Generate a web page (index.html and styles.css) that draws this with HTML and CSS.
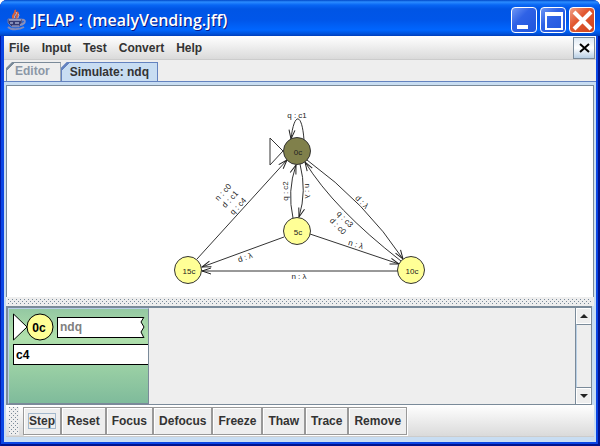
FILE: index.html
```html
<!DOCTYPE html>
<html lang="en">
<head>
  <meta charset="UTF-8">
  <meta name="viewport" content="width=device-width, initial-scale=1.0">
  <title>JFLAP : (mealyVending.jff)</title>
  <link rel="stylesheet" href="styles.css">
</head>
<body>
  <div class="window">
    <header class="titlebar">
      <svg class="logo" width="20" height="22" viewBox="0 0 20 22" fill="none">
        <path d="M7 10C3 6 10 5 8 1M10 10c-2-4 3-4 0-7" stroke="#d9603c" stroke-width="2"/>
        <path d="M8 9c-2-2 3-4 1-6M11 9c0-2 2-3 0-4" stroke="#ffc9a0"/>
        <path d="M1 10h14v4l-3 4H5l-4-4z" fill="#353a72" stroke="#7078a8"/>
        <path d="M2 11h12M3 14h3M8 14h4" stroke="#d6dcf6"/>
        <path d="M5 17h7" stroke="#a9b1da"/>
        <path d="M15 11c4-1 4 4-2 5" stroke="#8a90bc" stroke-width="2"/>
        <path d="M1 18c3 3 11 3 16 0" stroke="#8088b8" stroke-width="2"/>
      </svg>
      <h1>JFLAP : (mealyVending.jff)</h1>
      <button class="win-btn" aria-label="Minimize">
        <svg width="22" height="22" viewBox="0 0 22 22"><path d="M4 16h11v4H4z" fill="#fff"/></svg>
      </button>
      <button class="win-btn" aria-label="Maximize">
        <svg width="22" height="22" viewBox="0 0 22 22"><path d="M3 3h18v18H3zM5 7v12h14V7z" fill="#fff" fill-rule="evenodd"/></svg>
      </button>
      <button class="win-btn win-close" aria-label="Close">
        <svg width="22" height="22" viewBox="0 0 22 22"><path d="M3 3l17 17M20 3L3 20" stroke="#fff" stroke-width="4"/></svg>
      </button>
    </header>

    <nav class="menubar">
      <button>File</button>
      <button>Input</button>
      <button>Test</button>
      <button>Convert</button>
      <button>Help</button>
      <button class="tab-close" aria-label="Close tab">
        <svg width="12" height="12" viewBox="0 0 12 12"><path d="M2 2l9 8M11 2l-9 8" stroke="#000" stroke-width="2"/></svg>
      </button>
    </nav>

    <div class="tabs">
      <button class="tab">Editor</button>
      <button class="tab active">Simulate: ndq</button>
    </div>

    <main class="pane">
      <div class="canvas">
        <svg class="diagram" viewBox="7 86 586 211">
          <defs>
            <marker id="arrow" viewBox="-10 -4 11 8" markerWidth="11" markerHeight="8" markerUnits="userSpaceOnUse" orient="auto">
              <path d="M-9 -3L0 0L-9 3" fill="none" stroke="#222"/>
            </marker>
          </defs>

          <g class="edges">
            <path d="M304 140C302 112 294 112 291 139"/>
            <path d="M197 259L287 160"/>
            <path d="M293 218Q287 191 296 165"/>
            <path d="M300 164Q307 191 299 217"/>
            <path d="M401 261Q334 209 305 162"/>
            <path d="M307 160Q366 203 403 259"/>
            <path d="M284 237L202 267"/>
            <path d="M310 234L399 264"/>
            <path d="M398 271L202 271"/>
          </g>

          <path class="start" d="M270 138L283 151L270 165Z"/>
          <circle class="state current" cx="297" cy="151" r="13.5"/>
          <circle class="state" cx="297" cy="231" r="13.5"/>
          <circle class="state" cx="188" cy="270" r="13.5"/>
          <circle class="state" cx="411" cy="270" r="13.5"/>

          <g class="labels">
            <text x="298" y="155">0c</text>
            <text x="298" y="235">5c</text>
            <text x="189" y="274">15c</text>
            <text x="412" y="274">10c</text>
            <text x="297" y="118">q : c1</text>
            <text transform="translate(225 194) rotate(-47)">n : c0</text>
            <text transform="translate(232 201) rotate(-47)">d : c1</text>
            <text transform="translate(240 208) rotate(-47)">q : c4</text>
            <text transform="translate(288 191) rotate(-90)">q : c2</text>
            <text transform="translate(305 191) rotate(90)">n : λ</text>
            <text transform="translate(360 204) rotate(46)">d : λ</text>
            <text transform="translate(343 221) rotate(46)">q : c3</text>
            <text transform="translate(336 228) rotate(46)">d : c0</text>
            <text transform="translate(355 247) rotate(18)">n : λ</text>
            <text transform="translate(246 260) rotate(-20)">d : λ</text>
            <text x="299" y="279">n : λ</text>
          </g>
        </svg>
      </div>

      <div class="splitter"></div>

      <div class="configs">
        <div class="config">
          <div class="config-row">
            <svg width="41" height="28" viewBox="0 0 41 28">
              <path d="M.5 1v26L14 14z" fill="#fff" stroke="#000"/>
              <circle cx="27" cy="14" r="13" fill="#ffff96" stroke="#000"/>
              <text class="config-state" x="26" y="19">0c</text>
            </svg>
            <div class="tape torn">
              <span>ndq</span>
              <svg width="7" height="21" viewBox="0 0 7 21">
                <path d="M7 0H6L3 5L6 10L3 15L6 21H7Z" fill="#a4d8a8"/>
                <path d="M6 0L3 5L6 10L3 15L6 21" fill="none" stroke="#000"/>
              </svg>
            </div>
          </div>
          <div class="tape output">c4</div>
        </div>
        <div class="scrollbar">
          <button aria-label="Scroll up"><svg width="8" height="4" viewBox="0 0 8 4"><path d="M0 4L4 0L8 4z" fill="#222"/></svg></button>
          <div class="track"></div>
          <button aria-label="Scroll down"><svg width="8" height="4" viewBox="0 0 8 4"><path d="M0 0L4 4L8 0z" fill="#222"/></svg></button>
        </div>
      </div>

      <div class="toolbar">
        <div class="grip"></div>
        <button class="focused"><span>Step</span></button>
        <button>Reset</button>
        <button>Focus</button>
        <button>Defocus</button>
        <button>Freeze</button>
        <button>Thaw</button>
        <button>Trace</button>
        <button>Remove</button>
      </div>
    </main>
  </div>
</body>
</html>
```
FILE: styles.css
```css
* {
  box-sizing: border-box;
}

body {
  margin: 0;
  font-family: "Liberation Sans", Arial, sans-serif;
  font-size: 12px;
  font-weight: bold;
  color: #333;
}

button {
  font: inherit;
  color: inherit;
  padding: 0;
  border: none;
  background: none;
  white-space: nowrap;
}

svg {
  display: block;
}

.window {
  display: flex;
  flex-direction: column;
  height: 100vh;
  padding: 0 4px 4px;
  background: #0a45e4;
  border-radius: 7px 7px 0 0;
  box-shadow: inset 1px 0 #0019a8, inset -2px -2px #00138c;
}

/* title bar */
.titlebar {
  display: flex;
  align-items: center;
  gap: 3px;
  height: 36px;
  flex-shrink: 0;
  margin: 0 -4px;
  padding: 3px 5px 0 7px;
  border-radius: 7px 7px 0 0;
  background: linear-gradient(#0047c8 0, #2b8cff 2px, #0866f4 5px, #0055e5 9px, #0056e9 20px, #0066ff 30px, #0050d8 34px, #003dba);
}

.titlebar h1 {
  flex: 1;
  margin: 0 0 0 2px;
  font-family: "Open Sans", sans-serif;
  font-size: 16px;
  font-weight: 600;
  color: #fff;
  text-shadow: 1px 1px #0a1883;
}

.win-btn {
  width: 26px;
  height: 26px;
  border: 1px solid #fff;
  border-radius: 4px;
  background: linear-gradient(135deg, #6f97f5, #2f62e6 40%, #2056dd);
}

.win-btn svg {
  margin: 1px;
}

.win-close {
  background: linear-gradient(135deg, #f0a088, #e25a33 40%, #cf431c);
}

/* menu */
.menubar {
  display: flex;
  align-items: center;
  gap: 12px;
  height: 24px;
  flex-shrink: 0;
  padding: 0 1px 0 5px;
  background: linear-gradient(#fff, #dadada);
  border-bottom: 1px solid #ccc;
}

.tab-close {
  display: flex;
  align-items: center;
  justify-content: center;
  width: 22px;
  height: 22px;
  margin-left: auto;
  border: 1px solid #7a8a99;
  background: linear-gradient(#dde8f3, #fff 50%, #b8cfe5);
}

/* tabs */
.tabs {
  display: flex;
  height: 21px;
  flex-shrink: 0;
  padding: 2px 2px 0;
  background: #eee;
}

.tab {
  padding: 0 10px 2px 8px;
  color: #8b97a6;
  border: 1px solid #7a8a99;
  border-bottom: none;
  background: linear-gradient(135deg, #7a8a99 5px, #eee 5px);
  clip-path: polygon(6px 0, 100% 0, 100% 100%, 0 100%, 0 6px);
}

.tab.active {
  padding: 0 8px;
  color: #333;
  border-color: #6382bf;
  background: linear-gradient(135deg, #6382bf 5px, #c8ddf2 5px);
}

/* simulation pane */
.pane {
  display: flex;
  flex-direction: column;
  flex: 1;
  min-height: 0;
  padding: 3px 2px 5px;
  border-top: 1px solid #6382bf;
  background: #c8ddf2;
}

.canvas {
  flex: 1;
  min-height: 0;
  border: 1px solid #7a8a99;
  border-bottom: none;
  background: #fff;
}

.diagram {
  width: 100%;
  height: 100%;
}

.edges {
  fill: none;
  stroke: #333;
}

.edges path {
  marker-end: url(#arrow);
}

.start {
  fill: #fff;
  stroke: #333;
}

.state {
  fill: #ffff96;
  stroke: #333;
}

.state.current {
  fill: #80804b;
}

.labels {
  font-size: 8px;
  font-weight: normal;
  text-anchor: middle;
  fill: #222;
}

.splitter,
.grip {
  background:
    conic-gradient(at 1px 1px, transparent 75%, #7a8a99 0) 0 0 / 4px 4px,
    conic-gradient(at 1px 1px, transparent 75%, #7a8a99 0) 2px 2px / 4px 4px,
    #eee;
}

.splitter {
  height: 9px;
  flex-shrink: 0;
  border: 2px solid #eee;
}

/* configurations */
.configs {
  display: flex;
  height: 99px;
  flex-shrink: 0;
  margin-right: 2px;
  border: 1px solid #7a8a99;
  border-width: 2px 1px 1px 2px;
  background: #eee;
}

.config {
  width: 141px;
  padding: 4px 0 0 4px;
  border: 1px solid #7a8a99;
  border-left-color: #b8cfe5;
  border-top-color: #b8cfe5;
  background: linear-gradient(#94c8a2, #b0e0ac 30%, #7fbb9b);
}

.config-row {
  display: flex;
  align-items: center;
  gap: 3px;
  padding-right: 3px;
}

.config-state {
  font-size: 12px;
  text-anchor: middle;
}

.tape {
  display: flex;
  align-items: center;
  height: 21px;
  padding-left: 2px;
  border: 1px solid #000;
  background: #fff;
  color: #000;
}

.torn {
  flex: 1;
  justify-content: space-between;
  border-right: none;
  color: #808080;
}

.output {
  margin-top: 3px;
  border-right: none;
}

.scrollbar {
  display: flex;
  flex-direction: column;
  width: 16px;
  margin-left: auto;
  border-left: 1px solid #7a8a99;
}

.scrollbar button {
  display: flex;
  align-items: center;
  justify-content: center;
  height: 16px;
  border: 1px solid #fff;
}

.track {
  flex: 1;
  border: 1px solid #7a8a99;
  border-width: 1px 0 1px 1px;
  border-left-color: #b8cfe5;
}

/* toolbar */
.toolbar {
  display: flex;
  align-items: center;
  height: 32px;
  flex-shrink: 0;
  padding: 0 3px;
  border-bottom: 1px solid #ccc;
  background: linear-gradient(#fff, #dadada);
}

.grip {
  width: 10px;
  height: 28px;
  margin-right: 4px;
}

.toolbar button {
  height: 28px;
  padding: 0 5px;
  border: 1px solid #999;
  background: #eee;
  box-shadow: inset 1px 1px #fff, 1px 1px #fff;
}

.focused span {
  outline: 1px solid #a3b8cc;
}
```
